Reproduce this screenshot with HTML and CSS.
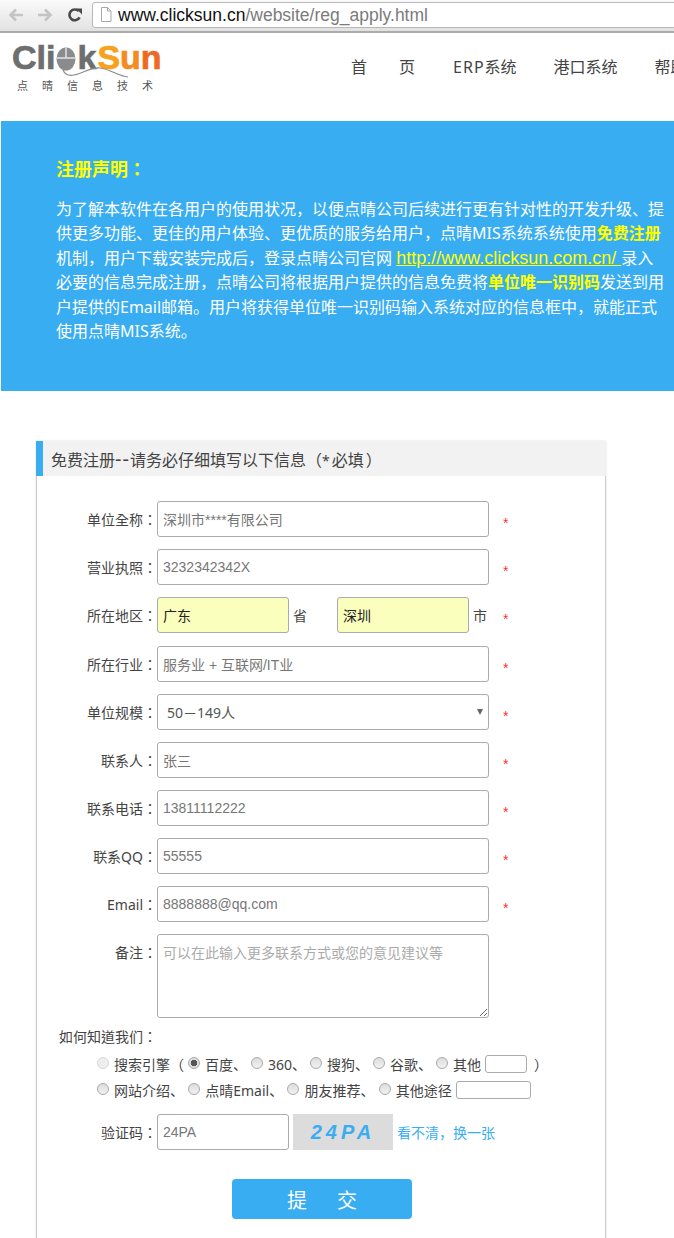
FILE: index.html
```html
<!DOCTYPE html>
<html lang="zh-CN">
<head>
<meta charset="utf-8">
<title>免费注册</title>
<link rel="stylesheet" href="styles.css">
</head>
<body>
<div class="chrome">
  <svg class="tool" width="18" height="16" viewBox="0 0 18 16"><path d="M16 8H3M9 2.500L3.500 8 9 13.500" fill="none" stroke="#c4c4c4" stroke-width="2.600"/></svg>
  <svg class="tool" width="18" height="16" viewBox="0 0 18 16"><path d="M2 8h13M9 2.500L14.500 8 9 13.500" fill="none" stroke="#c4c4c4" stroke-width="2.600"/></svg>
  <svg class="tool reload" width="16" height="16" viewBox="0 0 16 16"><path d="M12.600 10.400A5.400 5.400 0 1 1 11.800 4.200" fill="none" stroke="#4a4a4a" stroke-width="2.600"/><path d="M9 1.500h6v6z" fill="#4a4a4a"/></svg>
  <div class="omnibox">
    <svg class="doc" width="12" height="15" viewBox="0 0 12 15"><path d="M1.500.5h6l3.500 3.500v10.500h-9.500zM7.500.5v3.500h3.500" fill="#fff" stroke="#a8a8a8"/></svg>
    <span class="url-host">www.clicksun.cn</span><span class="url-path">/website/reg_apply.html</span>
  </div>
</div>

<header class="site-head">
  <div class="logo">
    <div class="logo-word"><span class="logo-grey">Cli</span><span class="logo-gap"></span><span class="logo-grey">k</span><span class="logo-s">S</span><span class="logo-u">u</span><span class="logo-n">n</span></div>
    <div class="logo-sub">点晴信息技术</div>
    <svg class="logo-mouse" width="80" height="40" viewBox="0 0 80 40"><ellipse cx="11" cy="14" rx="9.500" ry="11.500" fill="#8a8b8d"/><path d="M11 3v10M2 13h18" stroke="#e4e4e4" stroke-width="1.500"/><path d="M8 25c2 5 6 6 11 5 8-1 16-8 26-7s18 8 28 9" fill="none" stroke="#8d8d8d" stroke-width="1.200"/></svg>
  </div>
  <nav class="nav">
    <a class="nav-item nav-home">首<span>页</span></a>
    <a class="nav-item"><span class="latin">ERP</span>系统</a>
    <a class="nav-item">港口系统</a>
    <a class="nav-item">帮助中心</a>
  </nav>
</header>

<section class="banner">
  <h2 class="banner-title">注册声明：</h2>
  <p class="banner-text">为了解本软件在各用户的使用状况，以便点晴公司后续进行更有针对性的开发升级、提<br>供更多功能、更佳的用户体验、更优质的服务给用户，点晴MIS系统系统使用<b class="hl">免费注册</b><br>机制，用户下载安装完成后，登录点晴公司官网 <a class="hl-link">http://www.clicksun.com.cn/ </a>录入<br>必要的信息完成注册，点晴公司将根据用户提供的信息免费将<b class="hl">单位唯一识别码</b>发送到用<br>户提供的Email邮箱。用户将获得单位唯一识别码输入系统对应的信息框中，就能正式<br>使用点晴MIS系统。</p>
</section>

<section class="panel">
  <h3 class="panel-head">免费注册<span class="dashes">--</span>请务必仔细填写以下信息（<span class="head-star">*</span>必填<span class="close-paren">）</span></h3>
  <form class="panel-body">
    <div class="row"><label class="lbl">单位全称：</label><input class="field wide" value="深圳市****有限公司"><i class="star">*</i></div>
    <div class="row"><label class="lbl">营业执照：</label><input class="field wide" value="3232342342X"><i class="star">*</i></div>
    <div class="row row-region"><label class="lbl">所在地区：</label><input class="field half auto" value="广东"><span class="unit">省</span><input class="field half auto" value="深圳"><span class="unit unit-end">市</span><i class="star star-near">*</i></div>
    <div class="row"><label class="lbl">所在行业：</label><input class="field wide" value="服务业 + 互联网/IT业"><i class="star">*</i></div>
    <div class="row"><label class="lbl">单位规模：</label><div class="select-wrap"><select class="field select"><option>50－149人</option></select></div><i class="star">*</i></div>
    <div class="row"><label class="lbl">联系人：</label><input class="field wide" value="张三"><i class="star">*</i></div>
    <div class="row"><label class="lbl">联系电话：</label><input class="field wide" value="13811112222"><i class="star">*</i></div>
    <div class="row"><label class="lbl">联系QQ：</label><input class="field wide" value="55555"><i class="star">*</i></div>
    <div class="row"><label class="lbl">Email：</label><input class="field wide" value="8888888@qq.com"><i class="star">*</i></div>
    <div class="row row-top"><label class="lbl">备注：</label><textarea class="field wide area" placeholder="可以在此输入更多联系方式或您的意见建议等"></textarea></div>

    <div class="how-title">如何知道我们：</div>
    <div class="how-line">
      <label class="opt"><input class="radio" type="radio" disabled>搜索引擎（</label>
      <label class="opt"><input class="radio" type="radio" name="src" checked>百度、</label>
      <label class="opt"><input class="radio" type="radio" name="src">360、</label>
      <label class="opt"><input class="radio" type="radio" name="src">搜狗、</label>
      <label class="opt"><input class="radio" type="radio" name="src">谷歌、</label>
      <label class="opt"><input class="radio" type="radio" name="src">其他</label>
      <input class="mini mini-a"><span class="paren">）</span>
    </div>
    <div class="how-line how-line-2">
      <label class="opt"><input class="radio" type="radio" name="src">网站介绍、</label>
      <label class="opt"><input class="radio" type="radio" name="src">点晴Email、</label>
      <label class="opt"><input class="radio" type="radio" name="src">朋友推荐、</label>
      <label class="opt"><input class="radio" type="radio" name="src">其他途径</label>
      <input class="mini mini-b">
    </div>

    <div class="row row-code"><label class="lbl">验证码：</label><input class="field half" value="24PA"><div class="captcha">24PA</div><a class="refresh">看不清，换一张</a></div>
    <div class="submit-row"><button type="button" class="submit">提　交</button></div>
  </form>
</section>
</body>
</html>
```
FILE: styles.css
```css
* { box-sizing: border-box; }
html, body { margin: 0; padding: 0; height: 1238px; overflow: hidden; background: #fff; }
body { font-family: "Noto Sans", "Noto Sans CJK SC", sans-serif; color: #444; }

.chrome { height: 33px; display: flex; align-items: center; padding: 0 0 2px 7px; background: linear-gradient(#fafafa, #e2e2e2); border-bottom: 2px solid #ababab; }
.tool { flex: none; margin-right: 11px; }
.reload { margin: 0 9px 0 2px; }
.omnibox { flex: 1; height: 26px; margin-right: -4px; display: flex; align-items: center; padding-left: 7px; background: #fff; border: 1px solid #b8b8b8; border-radius: 3px; font: 17.500px/24px "Liberation Sans", sans-serif; white-space: nowrap; }
.doc { margin-right: 6px; flex: none; }
.url-host { color: #111; }
.url-path { color: #7b7b7b; }

.site-head { height: 88px; display: flex; justify-content: space-between; white-space: nowrap; }
.logo { position: relative; width: 170px; padding: 8px 0 0 12px; }
.logo-word { display: flex; height: 32px; font: bold 34px/32px "Liberation Sans", sans-serif; -webkit-text-stroke: .7px currentColor; }
.logo-grey { color: #6d6e70; }
.logo-s { margin-left: 1px; color: #f9a11b; }
.logo-u { color: #f58a1f; }
.logo-n { color: #ee6a22; }
.logo-gap { width: 22px; }
.logo-sub { margin: 6px 0 0 5px; font-size: 11px; line-height: 14px; letter-spacing: 14px; color: #555; }
.logo-mouse { position: absolute; left: 55px; top: 12px; }
.nav { display: flex; gap: 37px; padding: 22px 0 0; margin-left: 184px; flex: 1; font-size: 16px; line-height: 24px; color: #444; }
.nav-home span { margin-left: 32px; }
.nav-home { margin-right: 1px; }
.latin { letter-spacing: 1px; }

.banner { height: 270px; margin-left: 1px; padding: 34px 0 0 55px; background: #38adf2; color: #fff; white-space: nowrap; }
.banner-title { margin: 0; font: bold 18px/26px "Noto Sans CJK TC", sans-serif; font-feature-settings: "locl" 0; color: #ff0; }
.banner-text { margin: 16px 0 0; font-size: 16px; line-height: 24.400px; }
.hl { color: #ff0; font-weight: bold; }
.hl-link { color: #ff0; font: 18px "Liberation Sans", sans-serif; text-decoration: underline; }

.panel { width: 570px; height: 830px; margin: 50px 0 0 36px; border-left: 1px solid #ccc; border-right: 1px solid #ccc; box-shadow: 0 0 2px #ddd; }
.panel-head { position: relative; margin: 0 -1px; height: 35px; padding-left: 8px; background: #f2f2f2; border-left: 7px solid #38adf2; font-size: 16px; line-height: 35px; font-weight: normal; color: #444; white-space: nowrap; }
.dashes { font-size: 20px; letter-spacing: 1px; }
.close-paren { margin-left: 2px; }
.head-star { margin: 0 2px 0 0; font-size: 14px; }
.panel-body { padding-top: 25px; font-size: 14px; }

.row { display: flex; align-items: center; height: 36px; margin-bottom: 12px; }
.row-region { margin-bottom: 13px; }
.row-top { align-items: flex-start; height: 84px; margin-bottom: 0; }
.lbl { flex: none; width: 120px; padding-top: 1px; text-align: right; font-family: "Noto Sans", "Noto Sans CJK TC", sans-serif; font-feature-settings: "locl" 0; line-height: 36px; color: #444; white-space: nowrap; font-size: 14px; }
.field { display: block; height: 36px; padding: 0 5px; background: #fff; border: 1px solid #ababab; border-radius: 3px; font: 14px "Liberation Sans", "Noto Sans CJK SC", sans-serif; color: #777; outline: none; }
.wide { width: 332px; }
.half { width: 132px; flex: none; }
.auto { background: #faffbd; color: #222; }
.unit { width: 48px; padding-left: 4px; font-size: 14px; color: #444; }
.unit-end { width: 36px; }
.star { margin: 8px 0 0 14px; font: normal 14px "Liberation Sans", sans-serif; color: #f33; }
.star-near { margin-left: -2px; }
.select-wrap { position: relative; width: 332px; }
.select-wrap::after { content: ""; position: absolute; right: 6px; top: 15px; border: 3.500px solid transparent; border-top: 6px solid #666; border-bottom: 0; }
.select { width: 100%; padding-left: 9px; appearance: none; -webkit-appearance: none; font-family: "Noto Sans", "Noto Sans CJK SC", sans-serif; color: #555; }
.area { height: 84px; padding-top: 7px; resize: both; }
.area::placeholder { color: #aaa; font-family: "Noto Sans CJK SC", sans-serif; }

.how-title { margin: 8px 0 0 22px; line-height: 20px; color: #444; font-family: "Noto Sans CJK TC", sans-serif; font-feature-settings: "locl" 0; }
.how-line { display: flex; align-items: center; gap: 4px; height: 24px; margin: 6px 0 0 60px; color: #444; white-space: nowrap; }
.how-line-2 { margin-top: 2px; gap: 4.250px; }
.opt { display: flex; align-items: center; }
.radio { appearance: none; -webkit-appearance: none; flex: none; width: 12px; height: 12px; margin: -3px 5px 0 0; border: 1px solid #a9a9a9; border-radius: 50%; background: linear-gradient(#dcdcdc, #f2f2f2); }
.radio:disabled { border-color: #d8d8d8; background: #eee; }
.radio:checked { background: radial-gradient(circle, #555 0 3px, #ddd 3.500px); }
.mini { height: 18px; padding: 0; background: #fff; border: 1px solid #ababab; border-radius: 3px; }
.mini-a { width: 42px; }
.mini-b { width: 75px; }
.paren { margin-left: 3px; }

.row-code { margin: 12px 0 0; }
.captcha { width: 100px; height: 36px; margin-left: 4px; background: #dcdcdc; color: #38adf2; font: italic bold 20px/36px "Liberation Sans", sans-serif; letter-spacing: 4px; text-align: center; }
.refresh { margin-left: 4px; color: #38adf2; font-size: 14px; }
.submit-row { margin: 29px 0 0 195px; }
.submit { display: block; width: 180px; height: 40px; padding: 0 0 0 5px; background: #38adf2; border: 0; border-radius: 4px; color: #fff; font: 20px "Noto Sans CJK SC", sans-serif; letter-spacing: 5px; }
```
